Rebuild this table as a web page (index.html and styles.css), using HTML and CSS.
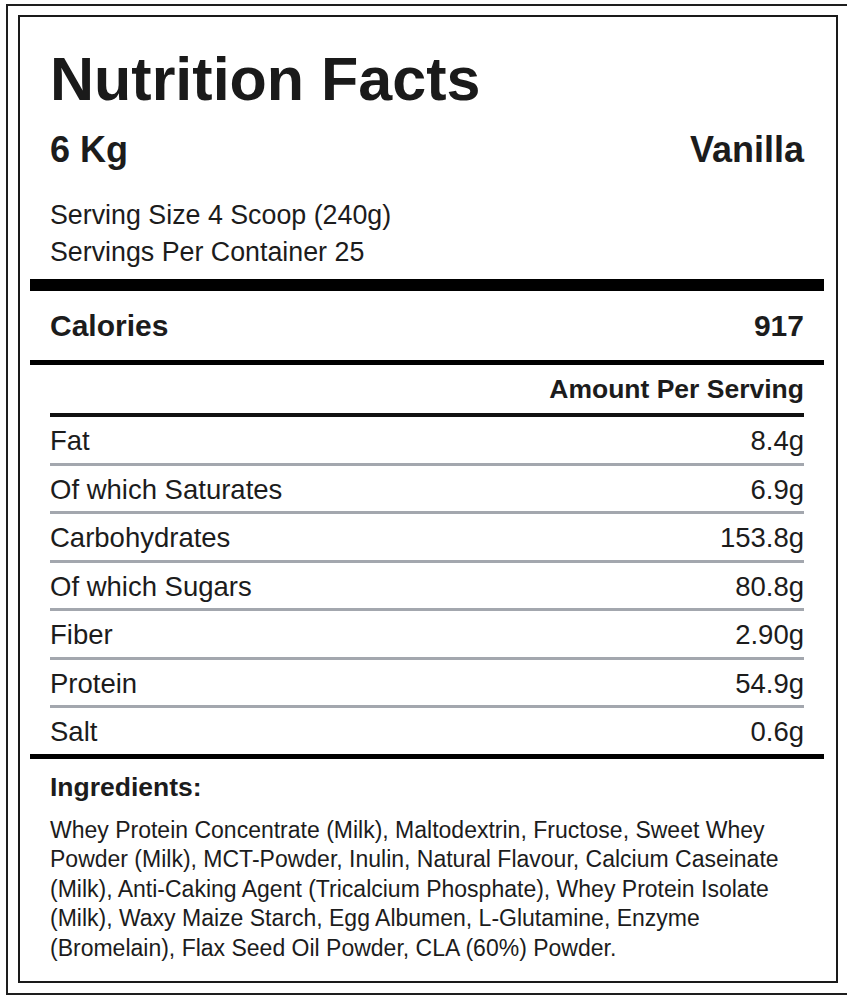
FILE: index.html
```html
<!DOCTYPE html>
<html lang="en">
<head>
<meta charset="utf-8">
<title>Nutrition Facts</title>
<link rel="stylesheet" href="styles.css">
</head>
<body>
<div class="outer">
  <section class="label">
    <h1 class="title">Nutrition Facts</h1>
    <div class="sub"><span>6 Kg</span><span>Vanilla</span></div>
    <div class="serving">
      <p>Serving Size 4 Scoop (240g)</p>
      <p>Servings Per Container 25</p>
    </div>
    <div class="bar bar-thick"></div>
    <div class="calories"><span>Calories</span><span>917</span></div>
    <div class="bar bar-mid"></div>
    <div class="aps">Amount Per Serving</div>
    <ul class="nutrients">
      <li class="nutrient"><span>Fat</span><span>8.4g</span></li>
      <li class="nutrient"><span>Of which Saturates</span><span>6.9g</span></li>
      <li class="nutrient"><span>Carbohydrates</span><span>153.8g</span></li>
      <li class="nutrient"><span>Of which Sugars</span><span>80.8g</span></li>
      <li class="nutrient"><span>Fiber</span><span>2.90g</span></li>
      <li class="nutrient"><span>Protein</span><span>54.9g</span></li>
      <li class="nutrient"><span>Salt</span><span>0.6g</span></li>
    </ul>
    <div class="bar bar-mid"></div>
    <div class="ingredients">
      <h2>Ingredients:</h2>
      <p>Whey Protein Concentrate (Milk), Maltodextrin, Fructose, Sweet Whey Powder (Milk), MCT-Powder, Inulin, Natural Flavour, Calcium Caseinate (Milk), Anti-Caking Agent (Tricalcium Phosphate), Whey Protein Isolate (Milk), Waxy Maize Starch, Egg Albumen, L-Glutamine, Enzyme (Bromelain), Flax Seed Oil Powder, CLA (60%) Powder.</p>
    </div>
  </section>
</div>
</body>
</html>
```

FILE: styles.css
```css
html, body {
  margin: 0;
  padding: 0;
  overflow: hidden;
  background: #fff;
}

body {
  font-family: "Liberation Sans", Arial, sans-serif;
  color: #1c1c1c;
}

.outer {
  margin: 4px 0 0 6px;
  border: 2px solid #1e1e1e;
  padding: 9px 10px 10px 10px;
  width: 820px;
}

.label {
  border: 2px solid #1a1a1a;
  padding: 20px 12px 0 10px;
}

.title {
  margin: 0;
  padding: 2px 20px 0;
  height: 78px;
  line-height: 80px;
  font-size: 61px;
  font-weight: 700;
  color: #1a1a1a;
}

.sub {
  display: flex;
  justify-content: space-between;
  padding: 0 20px;
  height: 66px;
  line-height: 66px;
  font-size: 36px;
  font-weight: 700;
}

.serving {
  padding: 14px 20px 8px;
  font-size: 26.8px;
  line-height: 37px;
}

.serving p {
  margin: 0;
}

.bar {
  background: #000;
}

.bar-thick {
  height: 12px;
}

.bar-mid {
  height: 5px;
}

.calories {
  display: flex;
  justify-content: space-between;
  padding: 0 20px;
  height: 69px;
  line-height: 69px;
  font-size: 30px;
  font-weight: 700;
}

.aps {
  padding: 0 20px;
  height: 48px;
  line-height: 48px;
  text-align: right;
  font-size: 26.5px;
  font-weight: 700;
}

.nutrients {
  list-style: none;
  margin: 0 20px;
  padding: 0;
  border-top: 4px solid #111;
}

.nutrient {
  display: flex;
  justify-content: space-between;
  height: 42.5px;
  padding-top: 3px;
  line-height: 42.5px;
  font-size: 27.5px;
  border-bottom: 3px solid #a3a7ae;
}

.nutrient:last-child {
  border-bottom: none;
}

.ingredients {
  padding: 0 20px 17.5px;
}

.ingredients h2 {
  margin: 0;
  height: 57px;
  line-height: 57px;
  font-size: 26.5px;
  font-weight: 700;
}

.ingredients p {
  margin: 0;
  font-size: 23px;
  line-height: 29.5px;
}
```
